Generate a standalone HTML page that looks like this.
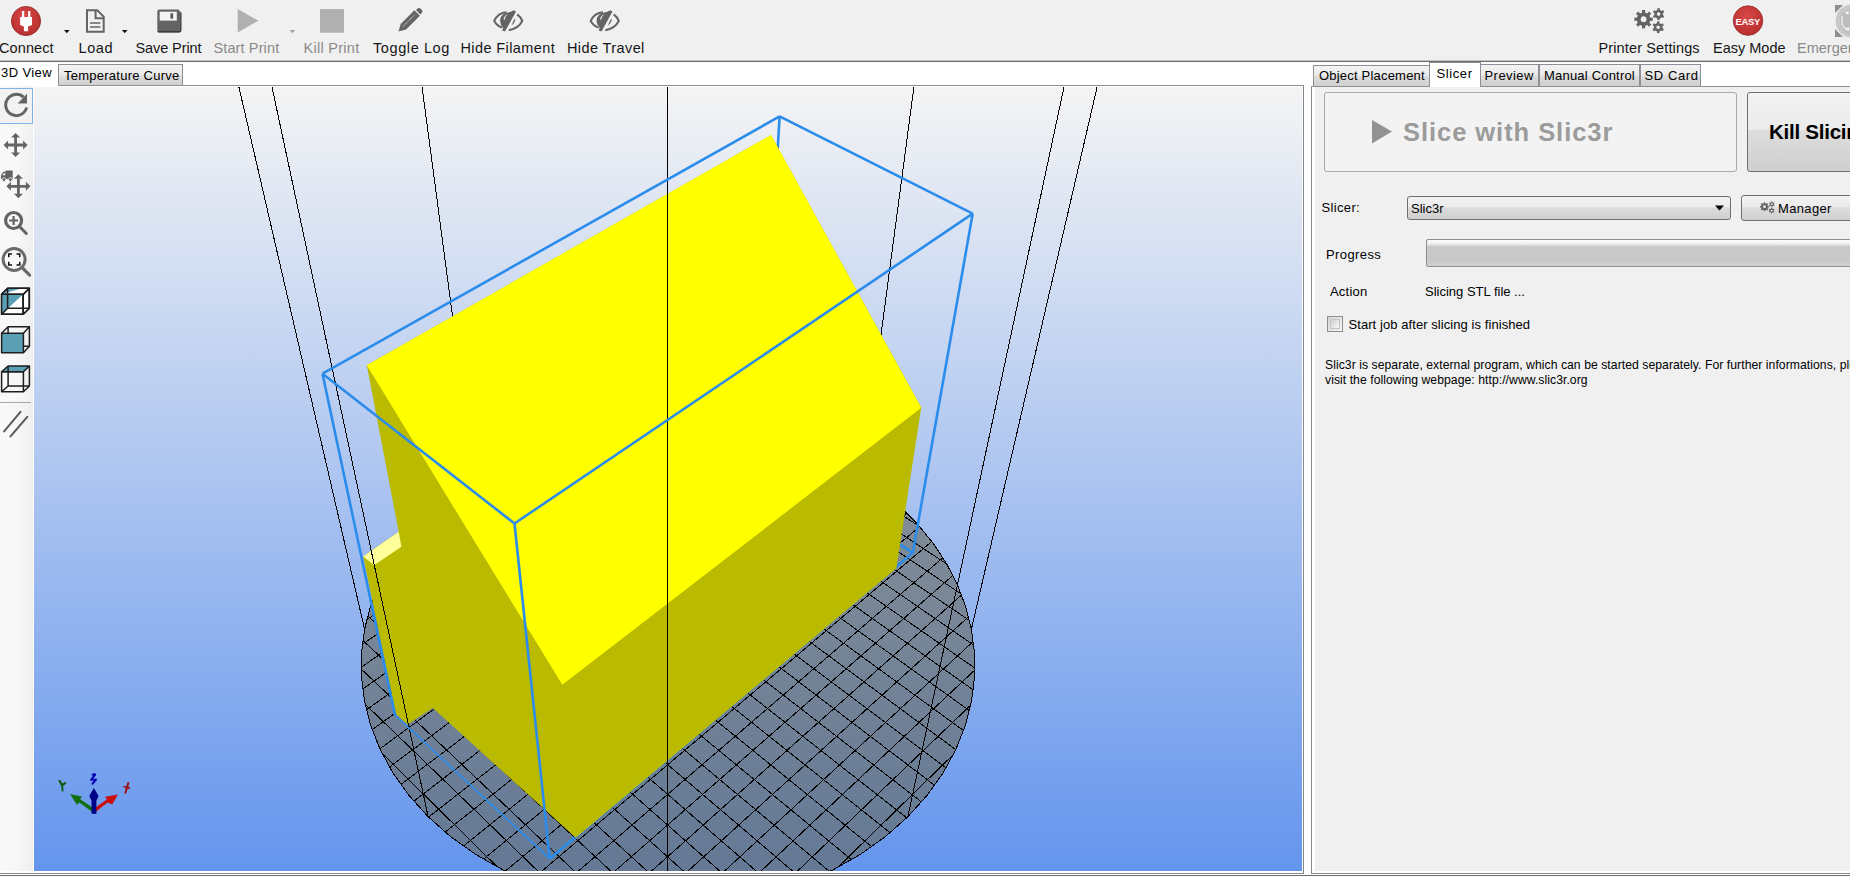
<!DOCTYPE html>
<html><head><meta charset="utf-8">
<style>
*{margin:0;padding:0;box-sizing:border-box}
html,body{width:1850px;height:880px;overflow:hidden;background:#fff;font-family:"Liberation Sans",sans-serif;color:#000}
.abs{position:absolute}
.lbl{position:absolute;top:39.5px;font-size:14.5px;white-space:nowrap;line-height:17px;color:#161616}
.dis{color:#8a8a8a}
.tab{position:absolute;font-size:13px;line-height:15px;white-space:nowrap;border:1px solid #8e8f94;border-bottom:none;background:linear-gradient(#f3f3f3,#ebebeb 45%,#dcdcdc 55%,#cfcfcf);padding-left:5px}
.tabsel{position:absolute;font-size:13px;line-height:15px;white-space:nowrap;background:#fff}
.t13{position:absolute;font-size:13px;line-height:15px;white-space:nowrap;color:#000}
</style></head><body>
<div class="abs" style="left:0;top:0;width:1850px;height:61px;background:#f0f0f0"></div>
<div class="abs" style="left:0;top:60px;width:1850px;height:1px;background:#c4c4c4"></div>
<div class="abs" style="left:0;top:61px;width:1850px;height:1px;background:#6b6b6b"></div>

<!-- toolbar labels -->
<div class="lbl" style="left:-1px;letter-spacing:0.1px">Connect</div>
<div class="lbl" style="left:78.5px;letter-spacing:0.6px">Load</div>
<div class="lbl" style="left:135.5px;letter-spacing:-0.1px">Save Print</div>
<div class="lbl dis" style="left:213.5px;letter-spacing:0.12px">Start Print</div>
<div class="lbl dis" style="left:303.5px;letter-spacing:0.28px">Kill Print</div>
<div class="lbl" style="left:373px;letter-spacing:0.6px">Toggle Log</div>
<div class="lbl" style="left:460.5px;letter-spacing:0.4px">Hide Filament</div>
<div class="lbl" style="left:567px;letter-spacing:0.4px">Hide Travel</div>
<div class="lbl" style="left:1598.5px;letter-spacing:0.13px">Printer Settings</div>
<div class="lbl" style="left:1713px">Easy Mode</div>
<div class="lbl dis" style="left:1797px">Emergency Stop</div>

<svg class="abs" style="left:0;top:0" width="1850" height="61">
 <!-- connect -->
 <defs>
  <radialGradient id="rg" cx="0.45" cy="0.35" r="0.7"><stop offset="0" stop-color="#d94848"/><stop offset="1" stop-color="#b52c2c"/></radialGradient>
 </defs>
 <circle cx="26" cy="21" r="14.6" fill="url(#rg)" stroke="#8f2424" stroke-width="0.8"/>
 <path d="M21.9 11h2.3v6h3.9v-6h2.2v6H32v8l-3.9 1.4V31.3h-4.2V26.4L20.1 25V17h1.8z" fill="#fff"/>
 <path d="M64 30h5.6l-2.8 3.2z" fill="#111"/>
 <path d="M121.9 30h5.6l-2.8 3.2z" fill="#111"/>
 <path d="M289.6 30h5.6l-2.8 3.2z" fill="#a0a0a0"/>
 <!-- load -->
 <path d="M87 10.2h10.3l6.4 6.4v15.2H87z" fill="none" stroke="#646464" stroke-width="2"/>
 <path d="M95.6 10v8.2h8.4" fill="none" stroke="#646464" stroke-width="2"/>
 <path d="M90 23h10.4M90 27h10.4" stroke="#646464" stroke-width="1.6"/>
 <!-- save -->
 <path d="M157.3 11.6q0-2 2-2h19l2.6 2.6v18.6q0 2-2 2h-19.6q-2 0-2-2z" fill="#646464"/>
 <path d="M157.8 31.6h21.8q1.3 0 1.3-1.3V12.6" fill="none" stroke="#3a3a3a" stroke-width="1.2"/>
 <rect x="159.7" y="11.7" width="17.1" height="8.9" fill="#f4f4f4"/>
 <rect x="170.5" y="13.3" width="2.6" height="5.4" fill="#555"/>
 <!-- start print -->
 <path d="M237.7 9.1L258.4 20.75L237.7 32.4z" fill="#b0b0b0"/>
 <!-- kill print -->
 <rect x="320" y="9.1" width="24" height="23.6" fill="#b0b0b0"/>
 <!-- pencil -->
 <path d="M398.5 31.6l2.2-7.6l13.7-13.8l5.5 5.5l-13.8 13.7z" fill="#646464"/>
 <path d="M403 26.5l11.5-11.5" stroke="#f0f0f0" stroke-width="0.9" stroke-dasharray="1.2 0.6"/>
 <path d="M416 9.9l2-1.6q1.4-0.9 2.6 0.3l1.3 1.3q1.1 1.2 0.2 2.5l-1.8 2.1z" fill="#646464"/>
 <!-- eyes -->
 <g id="eye1">
  <path d="M506.5 12.2Q498 12.6 494.2 20.9Q497 25.8 502.2 27.6" fill="none" stroke="#646464" stroke-width="2"/>
  <path d="M517.2 14.4Q520.6 16.8 522.3 21Q518.6 28.4 508.8 30.2" fill="none" stroke="#646464" stroke-width="2"/>
  <path d="M513.6 10.3L516 11.4L505 31.6L502.2 30.4L503.2 27.8Q499.6 24.2 500.2 19.6Q501.2 13.6 508 12.6L511.5 11.6z" fill="#646464"/>
  <path d="M503.6 19.6Q503.8 15.6 507.6 14.4Q505 16.2 504.8 19.8z" fill="#f0f0f0"/>
  <path d="M515.2 18.2Q515.6 22.6 511.4 25.6L513.6 20.6z" fill="#646464"/>
 </g>
 <use href="#eye1" x="96.5"/>
 <!-- gears -->
 <g fill="#646464" id="gears">
  <g transform="translate(1643.6,19.2)">
   <circle r="6.8"/>
   <g id="tooth8"><rect x="-1.6" y="-9.2" width="3.2" height="4" /><rect x="-1.6" y="5.2" width="3.2" height="4"/><rect x="-9.2" y="-1.6" width="4" height="3.2"/><rect x="5.2" y="-1.6" width="4" height="3.2"/></g>
   <use href="#tooth8" transform="rotate(45)"/>
   <circle r="2.9" fill="#f0f0f0"/>
  </g>
  <g transform="translate(1658.6,14.1)">
   <circle r="4.3"/>
   <g id="tooth6"><rect x="-1.2" y="-5.9" width="2.4" height="2.6"/><rect x="-1.2" y="3.3" width="2.4" height="2.6"/></g>
   <use href="#tooth6" transform="rotate(60)"/><use href="#tooth6" transform="rotate(120)"/>
   <circle r="1.8" fill="#f0f0f0"/>
  </g>
  <g transform="translate(1658.2,27.2)">
   <circle r="4.3"/>
   <use href="#tooth6"/><use href="#tooth6" transform="rotate(60)"/><use href="#tooth6" transform="rotate(120)"/>
   <circle r="1.8" fill="#f0f0f0"/>
  </g>
 </g>
 <!-- easy -->
 <circle cx="1748" cy="20.6" r="14.8" fill="url(#rg)" stroke="#962a2a" stroke-width="0.8"/>
 <text x="1747.8" y="24.5" font-family="Liberation Sans" font-weight="bold" font-size="9.4" fill="#fff" text-anchor="middle" letter-spacing="-0.2">EASY</text>
 <!-- emergency -->
 <path d="M1835 5h8l-8 8zM1835 29l8 8h-8z" fill="#8e8e8e"/>
 <circle cx="1852" cy="21" r="16.5" fill="#c9c9c9"/>
 <circle cx="1853" cy="21.5" r="13" fill="#bcbcbc"/>
 <path d="M1842.6 16.5a10.5 10.5 0 0 0 4.6 13.5" stroke="#f2f2f2" stroke-width="1.3" fill="none"/>
 <path d="M1844.5 12.5l4.2-1.8l-0.3 4.6zM1848.2 31.4l-2.6-3.6l4.6-0.4z" fill="#f2f2f2"/>
</svg>

<!-- left tabs -->
<div class="tabsel" style="left:0;top:62px;width:58px;height:24px;padding:3px 0 0 1px;letter-spacing:0.4px">3D View</div>
<div class="tab" style="left:58px;top:64px;width:125px;height:22px;padding-top:3px;padding-left:5px;letter-spacing:0.25px">Temperature Curve</div>
<div class="abs" style="left:58px;top:85px;width:1246px;height:1px;background:#8e8f94"></div>

<!-- left toolbar -->
<div class="abs" style="left:0;top:86px;width:34px;height:785px;background:linear-gradient(90deg,#f9f9f9,#f7f7f7 50%,#efefef 97%,#fdfdff 97%)"></div>
<div class="abs" style="left:-1px;top:88px;width:34px;height:36px;border:1px solid #7fb3e8;background:#f2f2f2"></div>
<div class="abs" style="left:0;top:402px;width:31px;height:1px;background:#a8a8a8"></div>
<svg class="abs" style="left:0;top:86px" width="34" height="785">
 <g fill="#646464">
  <!-- rotate -->
  <path d="M26.6 21.5A10.6 10.6 0 1 1 23.5 11.2" fill="none" stroke="#646464" stroke-width="3"/>
  <path d="M27 7.8v9.6h-9.4z"/>
  <!-- move -->
  <g id="mv" transform="translate(15.6,59)">
   <path d="M0 -8V8M-8 0H8" stroke="#646464" stroke-width="2.8"/>
   <path d="M0 -12l4.5 4.5h-9zM0 12l4.5 -4.5h-9zM-12 0l4.5 4.5v-9zM12 0l-4.5 4.5v-9z"/>
  </g>
  <use href="#mv" x="2.8" y="41.3"/>
  <!-- truck -->
  <path d="M5.5 84.6h7.2v8.3h-7.2zM1 89.2l2.4-3.4h2.4v7.1H1z"/><path d="M2.3 89.2l1.5-2h1.4v2z" fill="#f4f4f4"/>
  <circle cx="4" cy="93.6" r="1.9" stroke="#f4f4f4" stroke-width="0.8"/><circle cx="10.4" cy="93.6" r="1.9" stroke="#f4f4f4" stroke-width="0.8"/>
  <!-- zoom in -->
  <circle cx="13.6" cy="134.5" r="8" fill="none" stroke="#646464" stroke-width="3.2"/>
  <path d="M19.5 140.5l6.8 7" stroke="#646464" stroke-width="3" stroke-linecap="round"/>
  <path d="M13.6 130v9M9.1 134.5h9" stroke="#646464" stroke-width="2.2"/>
  <!-- zoom fit -->
  <circle cx="14.1" cy="173.5" r="11" fill="none" stroke="#6a6a6a" stroke-width="3"/>
  <path d="M22 181.5l7.6 7.6" stroke="#6a6a6a" stroke-width="3.2" stroke-linecap="round"/>
  <path d="M8 167.2h4v1.5h-2.5v2.5H8zM20.5 167.2h-4v1.5h2.5v2.5h1.5zM8 179.8h4v-1.5h-2.5v-2.5H8zM20.5 179.8h-4v-1.5h2.5v-2.5h1.5z" fill="#111"/>
 </g>
 <!-- cubes -->
 <g stroke="#1e1e1e" stroke-width="1.5" fill="none" stroke-linejoin="round">
  <path d="M1.6 208.2h21.6v20H1.6z" fill="#fff"/>
  <path d="M1.6 208.2l6-6h21.8l-6 6zM23.2 208.2l6-6v20l-6 6z" fill="#fff"/>
  <path d="M1.6 228.2V208.2h21.6zM1.6 208.2l6-6h14z" fill="#5a9fb4" stroke="none"/>
  <path d="M1.6 208.2h21.6v20H1.6zM1.6 208.2l6-6h21.8l-6 6M29.4 202.2v20l-6 6M7.6 202.2v20M7.6 222.2h21.8M7.6 222.2l-6 6" />
  <!-- cube 2 -->
  <path d="M1.6 247.2h21.8v19.5H1.6z" fill="#5a9fb4"/>
  <path d="M1.6 247.2l6.5-6.5h21.3l-6 6.5M29.4 240.7v19.5l-6 6.5M8.1 240.7v6.5M23.4 260.2h6" />
  <!-- cube 3 -->
  <path d="M1.6 285.8l6.5-5.8h21.3l-6 5.8z" fill="#5a9fb4"/>
  <path d="M1.6 285.8h21.8v20H1.6zM29.4 280v20l-6 5.8M8.1 280v20h21.3M8.1 300l-6.5 5.8" />
 </g>
 <path d="M4.1 345.4L20.5 325.8M10.5 350.4L27.3 330.8" stroke="#5a5a5a" stroke-width="2" stroke-linecap="round"/>
</svg>

<!-- 3D view frame -->
<div class="abs" style="left:1302px;top:86px;width:1px;height:786px;background:#fff"></div>
<div class="abs" style="left:1303px;top:85px;width:1px;height:789px;background:#828790"></div>
<div class="abs" style="left:0;top:873px;width:1304px;height:1px;background:#828790"></div>
<div class="abs" style="left:0;top:875px;width:1850px;height:1px;background:#6b6b6b"></div>
<div class="abs" style="left:0;top:876px;width:1850px;height:4px;background:#fff"></div>

<!-- right panel -->
<div class="abs" style="left:1311px;top:86px;width:1px;height:788px;background:#828790"></div>
<div class="abs" style="left:1311px;top:86px;width:118px;height:1px;background:#8e8f94"></div>
<div class="abs" style="left:1480px;top:86px;width:370px;height:1px;background:#8e8f94"></div>
<div class="abs" style="left:1311px;top:873px;width:539px;height:1px;background:#828790"></div>
<div class="abs" style="left:1315px;top:87px;width:535px;height:784px;background:#f0f0f0"></div>

<div class="tab" style="left:1313px;top:65px;width:117px;height:21px;padding-top:2px;padding-left:5px;letter-spacing:0.2px">Object Placement</div>
<div class="tabsel" style="left:1429px;top:62px;width:52px;height:25px;padding:3px 0 0 6.5px;letter-spacing:0.6px;border:1px solid #8e8f94;border-bottom:none">Slicer</div>
<div class="tab" style="left:1480px;top:64px;width:59px;height:22px;padding-top:3px;padding-left:3.5px;letter-spacing:0.45px">Preview</div>
<div class="tab" style="left:1539px;top:64px;width:101px;height:22px;padding-top:3px;padding-left:4px;letter-spacing:0.2px">Manual Control</div>
<div class="tab" style="left:1640px;top:64px;width:61px;height:22px;padding-top:3px;padding-left:3.5px;letter-spacing:0.6px">SD Card</div>

<!-- slice button -->
<div class="abs" style="left:1324px;top:92px;width:413px;height:80px;border:1px solid #a9a9a9;border-radius:3px;background:#f3f3f3"></div>
<svg class="abs" style="left:1371px;top:119px" width="24" height="26"><path d="M1 1L21 12.5L1 24.5z" fill="#929292"/></svg>
<div class="abs" style="left:1403px;top:117px;font-size:25.5px;line-height:30px;font-weight:bold;color:#9b9b9b;white-space:nowrap;letter-spacing:0.95px">Slice with Slic3r</div>
<!-- kill button -->
<div class="abs" style="left:1747px;top:92px;width:120px;height:80px;border:1px solid #707070;border-radius:3px;background:linear-gradient(#f2f2f2,#ebebeb 47%,#dddddd 48%,#cfcfcf)"></div>
<div class="abs" style="left:1769px;top:120px;font-size:20.5px;line-height:24px;font-weight:bold;color:#000;white-space:nowrap;letter-spacing:-0.25px">Kill Slicing</div>

<div class="t13" style="left:1321.5px;top:200px;letter-spacing:0.35px">Slicer:</div>
<div class="abs" style="left:1407px;top:196px;width:324px;height:24px;border:1px solid #707070;border-radius:3px;background:linear-gradient(#f2f2f2,#ebebeb 47%,#dddddd 48%,#cfcfcf)"></div>
<div class="t13" style="left:1411px;top:201px">Slic3r</div>
<svg class="abs" style="left:1714px;top:204px" width="12" height="8"><path d="M1 1.5h9l-4.5 5z" fill="#000"/></svg>
<div class="abs" style="left:1741px;top:195px;width:120px;height:26px;border:1px solid #707070;border-radius:3px;background:linear-gradient(#f2f2f2,#ebebeb 47%,#dddddd 48%,#cfcfcf)"></div>
<svg class="abs" style="left:1758px;top:200px" width="18" height="16"><use href="#gears" transform="translate(2,1.6) scale(0.485) translate(-1634.3,-8.7)"/></svg>
<div class="t13" style="left:1778px;top:201px;letter-spacing:0.35px">Manager</div>

<div class="t13" style="left:1326px;top:247px;letter-spacing:0.4px">Progress</div>
<div class="abs" style="left:1426px;top:239px;width:440px;height:28px;border:1px solid #8e8e8e;border-radius:2px;background:linear-gradient(#fbfbfb,#f4f4f4 9%,#e2e2e2 20%,#c9c9c9 24%,#c8c8c8 80%,#d2d2d2)"></div>
<div class="t13" style="left:1330px;top:284px;letter-spacing:0.2px">Action</div>
<div class="t13" style="left:1425px;top:284px">Slicing STL file ...</div>
<div class="abs" style="left:1327px;top:316px;width:16px;height:16px;border:1px solid #8e8f8f;background:linear-gradient(135deg,#d5d5d5,#f5f5f5)"><div style="margin:2px;width:10px;height:10px;border:1px solid #c6c6c6;background:linear-gradient(135deg,#cfcfcf,#f8f8f8)"></div></div>
<div class="t13" style="left:1348.5px;top:317px;letter-spacing:0.07px">Start job after slicing is finished</div>
<div class="abs" style="left:1325px;top:358px;font-size:12.2px;line-height:15px;white-space:nowrap;letter-spacing:0.05px">Slic3r is separate, external program, which can be started separately. For further informations, please<br>visit the following webpage: http://www.slic3r.org</div>

<svg id="scene" class="abs" style="left:0;top:0;pointer-events:none" width="1850" height="880"><defs><clipPath id="vc"><rect x="34" y="87" width="1268" height="784"/></clipPath><linearGradient id="bg" x1="0" y1="87" x2="0" y2="871" gradientUnits="userSpaceOnUse"><stop offset="0" stop-color="#f4f4f4"/><stop offset="1" stop-color="#6495ed"/></linearGradient></defs>
<g clip-path="url(#vc)">
<rect x="34" y="87" width="1268" height="784" fill="url(#bg)"/>
<polygon points="971.42,629.13 965.60,606.22 957.16,584.17 946.29,563.14 933.16,543.28 917.99,524.68 900.95,507.46 882.24,491.69 862.05,477.45 840.56,464.77 817.95,453.72 794.38,444.31 770.03,436.58 745.06,430.56 719.63,426.24 693.89,423.65 668.00,422.78 642.11,423.65 616.37,426.24 590.94,430.56 565.97,436.58 541.62,444.31 518.05,453.72 495.44,464.77 473.95,477.45 453.76,491.69 435.05,507.46 418.01,524.68 402.84,543.28 389.71,563.14 378.84,584.17 370.40,606.22 364.58,629.13 361.55,652.72 361.48,676.79 364.48,701.10 370.68,725.40 380.14,749.41 392.88,772.82 408.90,795.35 428.11,816.65 450.38,836.41 475.52,854.30 503.27,870.04 533.30,883.34 565.23,893.95 598.64,901.68 633.07,906.38 668.00,907.96 702.93,906.38 737.36,901.68 770.77,893.95 802.70,883.34 832.73,870.04 860.48,854.30 885.62,836.41 907.89,816.65 927.10,795.35 943.12,772.82 955.86,749.41 965.32,725.40 971.52,701.10 974.52,676.79 974.45,652.72" fill="rgb(102,103,92)" fill-opacity="0.6" stroke="#000" stroke-width="1" shape-rendering="crispEdges"/>
<path d="M792.82,443.76L919.64,526.54M544.29,443.37L416.83,526.00M744.93,430.53L946.80,564.03M592.15,430.31L389.59,563.36M708.99,424.96L961.29,594.03M628.09,424.84L375.00,593.28M678.49,422.92L969.60,620.64M658.58,422.90L366.59,619.85M651.33,423.14L973.79,645.14M685.73,423.19L362.29,644.32M626.53,425.01L974.84,668.13M710.52,425.12L361.15,667.30M603.52,428.20L973.29,689.93M733.51,428.37L362.61,689.08M581.96,432.51L969.46,710.71M755.05,432.75L366.34,709.86M561.60,437.83L963.56,730.60M775.39,438.12L372.14,729.75M542.28,444.08L955.75,749.65M794.69,444.42L379.86,748.81M523.89,451.20L946.11,767.90M813.05,451.60L389.41,767.08M506.33,459.18L934.70,785.35M830.58,459.63L400.73,784.56M489.56,468.01L921.56,802.00M847.31,468.51L413.78,801.24M473.54,477.71L906.70,817.82M863.29,478.25L428.56,817.09M458.26,488.29L890.11,832.76M878.54,488.88L445.08,832.08M443.70,499.82L871.76,846.76M893.05,500.45L463.35,846.13M429.90,512.34L851.61,859.74M906.80,513.02L483.42,859.17M416.89,525.94L829.61,871.59M919.75,526.66L505.36,871.09M404.74,540.73L805.65,882.18M931.84,541.50L529.26,881.75M393.55,556.86L779.62,891.34M942.97,557.68L555.25,890.99M383.46,574.54L751.34,898.84M952.97,575.39L583.49,898.58M374.70,594.03L720.57,904.37M961.64,594.93L614.23,904.21M367.62,615.77L686.95,907.50M968.62,616.71L647.85,907.44M362.77,640.38L649.88,907.54M973.36,641.36L684.92,907.59M361.17,669.01L608.34,903.33M974.81,670.02L726.51,903.51M365.06,704.04L560.06,892.46M970.72,705.09L774.88,892.77M382.01,753.31L497.46,867.04M953.45,754.41L837.72,867.48" stroke="#000" stroke-width="1" fill="none" shape-rendering="crispEdges"/>
<path d="M971.42,629.13L1098.73,80.00M862.05,477.45L914.86,80.00M473.95,477.45L421.14,80.00M364.58,629.13L237.27,80.00" stroke="#000" stroke-width="1" fill="none" shape-rendering="crispEdges"/>
<path d="M779.60,116.40L760.00,451.30M760.00,451.30L912.80,552.80M760.00,451.30L395.00,715.00M549.70,858.70L912.80,552.80" stroke="#2b8cec" stroke-width="2.6" fill="none"/>
<polygon points="366.80,365.20 771.00,135.00 921.25,407.50 896.40,568.20 575.80,837.80 432.80,708.00 407.50,724.40 395.90,714.10 363.20,556.40 398.70,531.80" fill="#baba00"/>
<polygon points="366.80,365.20 771.00,135.00 921.25,407.80 562.30,684.80" fill="#ffff00"/>
<polygon points="363.20,556.40 398.70,531.80 401.40,546.80 374.10,565.30" fill="#ffff9c"/>
<path d="M428.11,816.65L270.51,80.00M907.89,816.65L1065.49,80.00 M667.5,80L667.5,880" stroke="#000" stroke-width="1" fill="none" shape-rendering="crispEdges"/>
<path d="M779.60,116.40L972.70,213.60M779.60,116.40L322.50,373.70M972.70,213.60L514.50,523.50M322.50,373.70L514.50,523.50M514.50,523.50L549.70,858.70M972.70,213.60L912.80,552.80M322.50,373.70L395.00,715.00" stroke="#2b8cec" stroke-width="2.6" fill="none" stroke-linejoin="round"/>
<path d="M549.70,858.70L395.00,715.00" stroke="#2b8cec" stroke-width="1.7" fill="none"/>
<g>
<path d="M94.5 813.8L79.5 802.5L76.8 804.8L70 794.1L81.8 796.4L80.2 799.2L95.5 809.5z" fill="#107010"/>
<path d="M93.3 813.8L107.6 802.5L112.2 804.6L117.9 794.4L105.2 796.7L106.8 799.6L92.5 809.5z" fill="#cc0e0e"/>
<path d="M91.5 813.8V800.5L89.2 796L93.9 788.1L98.6 796L96.4 800.5V813.8z" fill="#000088"/>
<path d="M58.2 780.2l2.3-0.2l1.8 3.6l3.6-1.8l0.4 1.6l-3.2 2.6l0.5 5.2l-1.9 0.3l-0.4-5z" fill="#0e5a0e"/>
<path d="M91.8 774l3.2-1l1.4 1.8l-3.4 4.2l3.4-0.6l0.6 1.6l-4 4.8l-1.8-0.6l2.6-3.9l-3.2 0.6l-0.4-1.6l3-3.8l-1.4 0.3z" fill="#0000b0"/>
<path d="M127.6 782l1.8 0.6l-1.2 4.2l2.1 0.8l-0.6 1.4l-1.9-0.6l-1.7 5.4l-1.7-0.5l1.4-5.3l-2.6-1l0.6-1.3l2.4 0.8z" fill="#a00a0a"/>
</g>
</g></svg>
</body></html>
